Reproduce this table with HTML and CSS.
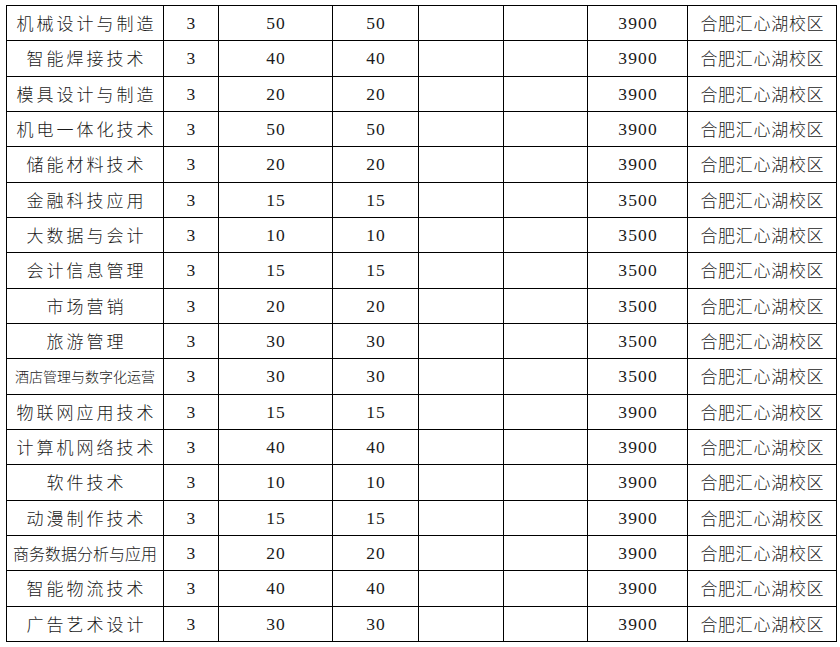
FILE: index.html
```html
<!DOCTYPE html>
<html lang="zh-CN">
<head>
<meta charset="utf-8">
<title>专业招生计划</title>
<link rel="stylesheet" href="styles.css">
</head>
<body>
<table class="plan">
<colgroup>
<col class="c1"><col class="c2"><col class="c3"><col class="c4"><col class="c5"><col class="c6"><col class="c7"><col class="c8">
</colgroup>
<tbody>
<tr><td class="major w7">机械设计与制造</td><td class="num">3</td><td class="num">50</td><td class="num">50</td><td></td><td></td><td class="num">3900</td><td class="campus">合肥汇心湖校区</td></tr>
<tr><td class="major w6">智能焊接技术</td><td class="num">3</td><td class="num">40</td><td class="num">40</td><td></td><td></td><td class="num">3900</td><td class="campus">合肥汇心湖校区</td></tr>
<tr><td class="major w7">模具设计与制造</td><td class="num">3</td><td class="num">20</td><td class="num">20</td><td></td><td></td><td class="num">3900</td><td class="campus">合肥汇心湖校区</td></tr>
<tr><td class="major w7">机电一体化技术</td><td class="num">3</td><td class="num">50</td><td class="num">50</td><td></td><td></td><td class="num">3900</td><td class="campus">合肥汇心湖校区</td></tr>
<tr><td class="major w6">储能材料技术</td><td class="num">3</td><td class="num">20</td><td class="num">20</td><td></td><td></td><td class="num">3900</td><td class="campus">合肥汇心湖校区</td></tr>
<tr><td class="major w6">金融科技应用</td><td class="num">3</td><td class="num">15</td><td class="num">15</td><td></td><td></td><td class="num">3500</td><td class="campus">合肥汇心湖校区</td></tr>
<tr><td class="major w6">大数据与会计</td><td class="num">3</td><td class="num">10</td><td class="num">10</td><td></td><td></td><td class="num">3500</td><td class="campus">合肥汇心湖校区</td></tr>
<tr><td class="major w6">会计信息管理</td><td class="num">3</td><td class="num">15</td><td class="num">15</td><td></td><td></td><td class="num">3500</td><td class="campus">合肥汇心湖校区</td></tr>
<tr><td class="major w4">市场营销</td><td class="num">3</td><td class="num">20</td><td class="num">20</td><td></td><td></td><td class="num">3500</td><td class="campus">合肥汇心湖校区</td></tr>
<tr><td class="major w4">旅游管理</td><td class="num">3</td><td class="num">30</td><td class="num">30</td><td></td><td></td><td class="num">3500</td><td class="campus">合肥汇心湖校区</td></tr>
<tr><td class="major w10">酒店管理与数字化运营</td><td class="num">3</td><td class="num">30</td><td class="num">30</td><td></td><td></td><td class="num">3500</td><td class="campus">合肥汇心湖校区</td></tr>
<tr><td class="major w7">物联网应用技术</td><td class="num">3</td><td class="num">15</td><td class="num">15</td><td></td><td></td><td class="num">3900</td><td class="campus">合肥汇心湖校区</td></tr>
<tr><td class="major w7">计算机网络技术</td><td class="num">3</td><td class="num">40</td><td class="num">40</td><td></td><td></td><td class="num">3900</td><td class="campus">合肥汇心湖校区</td></tr>
<tr><td class="major w4">软件技术</td><td class="num">3</td><td class="num">10</td><td class="num">10</td><td></td><td></td><td class="num">3900</td><td class="campus">合肥汇心湖校区</td></tr>
<tr><td class="major w6">动漫制作技术</td><td class="num">3</td><td class="num">15</td><td class="num">15</td><td></td><td></td><td class="num">3900</td><td class="campus">合肥汇心湖校区</td></tr>
<tr><td class="major w9">商务数据分析与应用</td><td class="num">3</td><td class="num">20</td><td class="num">20</td><td></td><td></td><td class="num">3900</td><td class="campus">合肥汇心湖校区</td></tr>
<tr><td class="major w6">智能物流技术</td><td class="num">3</td><td class="num">40</td><td class="num">40</td><td></td><td></td><td class="num">3900</td><td class="campus">合肥汇心湖校区</td></tr>
<tr><td class="major w6">广告艺术设计</td><td class="num">3</td><td class="num">30</td><td class="num">30</td><td></td><td></td><td class="num">3900</td><td class="campus">合肥汇心湖校区</td></tr>
</tbody>
</table>
</body>
</html>
```

FILE: styles.css
```css
html, body {
  margin: 0;
  padding: 0;
  background: #fff;
}

body {
  padding: 5px 0 0 6px;
  font-family: "Noto Sans CJK SC", "Liberation Serif", serif;
  color: #1a1a1a;
}

.plan {
  border-collapse: collapse;
  table-layout: fixed;
  width: 830px;
}

.c1 { width: 157px; }
.c2 { width: 55px; }
.c3 { width: 114px; }
.c4 { width: 86px; }
.c5 { width: 85px; }
.c6 { width: 84px; }
.c7 { width: 100px; }
.c8 { width: 149px; }

.plan tr {
  height: 35.33px;
}

.plan td {
  border: 1px solid #000;
  padding: 0;
  text-align: center;
  vertical-align: middle;
  white-space: nowrap;
  overflow: hidden;
  line-height: 20px;
}

.major {
  font-family: "Noto Sans CJK SC", sans-serif;
  font-size: 17px;
  font-weight: 300;
}

.w4, .w6, .w7 {
  letter-spacing: 3px;
  text-indent: 3px;
}

.w9 {
  font-size: 16px;
  letter-spacing: 0;
}

.w10 {
  font-size: 14px;
  letter-spacing: 0;
}

.num {
  font-family: "Liberation Serif", serif;
  font-size: 17.5px;
  letter-spacing: 1.2px;
  text-indent: 1.2px;
  padding-top: 1px;
}

.campus {
  font-family: "Noto Sans CJK SC", sans-serif;
  font-size: 17px;
  font-weight: 300;
  letter-spacing: 0.7px;
  text-indent: 0.7px;
}
```
